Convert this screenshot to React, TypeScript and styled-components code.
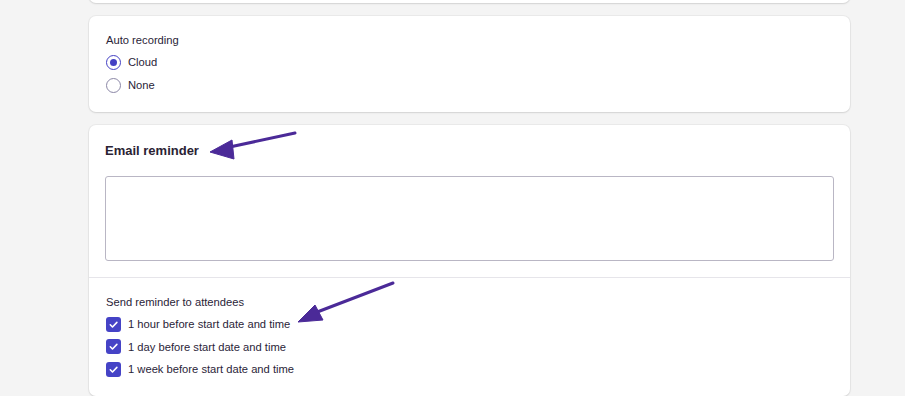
import React from 'react';
import styled, { createGlobalStyle } from 'styled-components';

const GlobalStyle = createGlobalStyle`
  html, body {
    margin: 0;
    padding: 0;
    background: #f4f4f4;
    font-family: "Liberation Sans", Arial, sans-serif;
    color: #2a2438;
    overflow: hidden;
  }
`;

const Page = styled.div`
  position: relative;
  width: 905px;
  height: 396px;
  overflow: hidden;
`;

const Column = styled.div`
  width: 761px;
  margin-left: 89px;
  margin-top: -40px;
  display: flex;
  flex-direction: column;
  gap: 13px;
`;

const Card = styled.div<{ $height?: number }>`
  background: #fff;
  border-radius: 7px;
  box-shadow: 0 0 0 1px rgba(0, 0, 0, 0.04), 0 1px 2px rgba(0, 0, 0, 0.1);
  ${p => (p.$height ? `height: ${p.$height}px;` : '')}
`;

const Section = styled.div<{ $pad: string }>`
  padding: ${p => p.$pad};
`;

const Divider = styled.div`
  height: 1px;
  background: #e6e5ea;
`;

const Label = styled.div`
  font-size: 11.2px;
  line-height: 14px;
  margin-bottom: 7px;
`;

const Heading = styled.h3`
  margin: 0 0 17px;
  font-size: 13px;
  line-height: 16px;
  font-weight: bold;
  color: #2a2233;
`;

const TextBox = styled.textarea`
  display: block;
  box-sizing: border-box;
  width: 100%;
  height: 85px;
  border: 1px solid #b9b6c4;
  border-radius: 3px;
  resize: none;
  outline: none;
  font-family: inherit;
`;

const OptionList = styled.div<{ $gap: number }>`
  display: flex;
  flex-direction: column;
  gap: ${p => p.$gap}px;
`;

const Option = styled.label`
  display: flex;
  align-items: center;
  gap: 7px;
  font-size: 11.2px;
  line-height: 16px;
  height: 16px;
`;

const Radio = styled.span<{ $checked: boolean }>`
  box-sizing: border-box;
  width: 15px;
  height: 15px;
  border-radius: 50%;
  border: 1.5px solid ${p => (p.$checked ? '#4340c4' : '#8b87a6')};
  display: flex;
  align-items: center;
  justify-content: center;
  &::after {
    content: '';
    display: ${p => (p.$checked ? 'block' : 'none')};
    width: 7px;
    height: 7px;
    border-radius: 50%;
    background: #4340c4;
  }
`;

const Check = styled.span`
  width: 15px;
  height: 15px;
  border-radius: 3px;
  background: #4543c6;
  display: flex;
  align-items: center;
  justify-content: center;
`;

const Arrow = styled.svg`
  position: absolute;
  left: 0;
  top: 0;
  pointer-events: none;
`;

const reminders = [
  '1 hour before start date and time',
  '1 day before start date and time',
  '1 week before start date and time',
];

const CheckMark = () => (
  <svg width="11" height="11" viewBox="0 0 12 12">
    <path d="M2.5 6.3l2.4 2.4 4.8-5" fill="none" stroke="#fff" strokeWidth="1.7" strokeLinecap="round" strokeLinejoin="round" />
  </svg>
);

const App: React.FC = () => (
  <Page>
    <GlobalStyle />
    <Column>
      <Card $height={43} />
      <Card>
        <Section $pad="17px 17px 19px">
          <Label>Auto recording</Label>
          <OptionList $gap={7}>
            <Option>
              <Radio $checked />
              Cloud
            </Option>
            <Option>
              <Radio $checked={false} />
              None
            </Option>
          </OptionList>
        </Section>
      </Card>
      <Card>
        <Section $pad="18px 16px 16px 16px">
          <Heading>Email reminder</Heading>
          <TextBox />
        </Section>
        <Divider />
        <Section $pad="17px 17px 19px">
          <Label>Send reminder to attendees</Label>
          <OptionList $gap={6.5}>
            {reminders.map(r => (
              <Option key={r}>
                <Check>
                  <CheckMark />
                </Check>
                {r}
              </Option>
            ))}
          </OptionList>
        </Section>
      </Card>
    </Column>
    <Arrow width="905" height="396">
      <g fill="#4b2a98" stroke="#4b2a98">
        <line x1="295" y1="133" x2="225" y2="148" strokeWidth="3" strokeLinecap="round" />
        <polygon points="210,152 232,140 234,159" strokeWidth="1" strokeLinejoin="round" />
        <line x1="393" y1="283" x2="312" y2="314" strokeWidth="3" strokeLinecap="round" />
        <polygon points="298,322 315,305 323,320" strokeWidth="1" strokeLinejoin="round" />
      </g>
    </Arrow>
  </Page>
);

export default App;
